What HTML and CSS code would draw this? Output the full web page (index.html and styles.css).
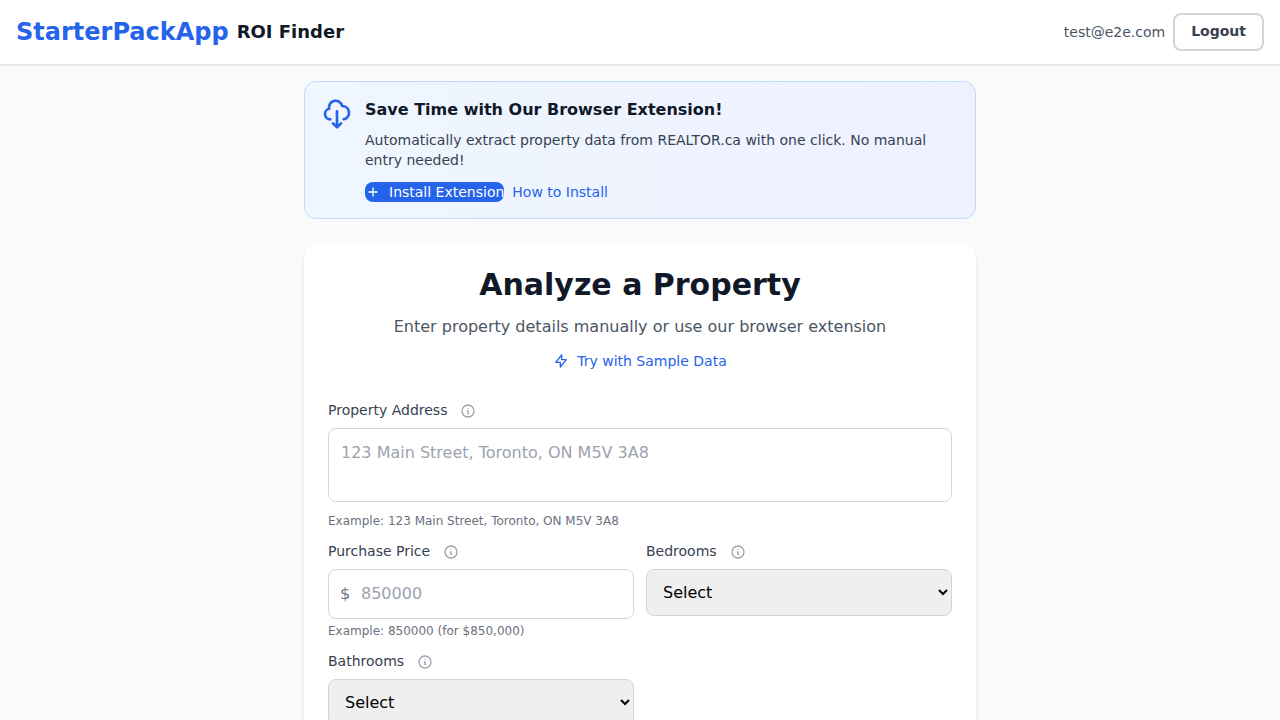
FILE: index.html
```html
<!DOCTYPE html>
<html lang="en">
<head>
<meta charset="utf-8">
<meta name="viewport" content="width=device-width, initial-scale=1">
<title>ROI Finder</title>
<link rel="stylesheet" href="styles.css">
</head>
<body>
<svg class="sprite" aria-hidden="true">
  <symbol id="info" viewBox="0 0 24 24"><path d="M13 16h-1v-4h-1m1-4h.01M21 12a9 9 0 11-18 0 9 9 0 0118 0z"/></symbol>
</svg>
<header class="topbar">
  <div class="brand">
    <a class="brand-name" href="#">StarterPackApp</a>
    <span class="brand-product">ROI Finder</span>
  </div>
  <div class="account">
    <span class="account-email">test@e2e.com</span>
    <button class="logout" type="button">Logout</button>
  </div>
</header>
<main class="page">
  <section class="banner">
    <svg class="icon banner-icon" viewBox="0 0 24 24" aria-hidden="true"><path d="M7 16a4 4 0 01-.88-7.903A5 5 0 1115.9 6L16 6a5 5 0 011 9.9M9 19l3 3m0 0l3-3m-3 3V10"/></svg>
    <div class="banner-body">
      <h2 class="banner-title">Save Time with Our Browser Extension!</h2>
      <p class="banner-text">Automatically extract property data from REALTOR.ca with one click. No manual entry needed!</p>
      <div class="banner-actions">
        <a class="install" href="#"><svg class="icon icon-small" viewBox="0 0 24 24" aria-hidden="true"><path d="M12 6v6m0 0v6m0-6h6m-6 0H6"/></svg>Install Extension</a>
        <a class="link" href="#">How to Install</a>
      </div>
    </div>
  </section>
  <section class="card">
    <div class="card-head">
      <h1 class="card-title">Analyze a Property</h1>
      <p class="card-subtitle">Enter property details manually or use our browser extension</p>
      <button class="sample" type="button"><svg class="icon icon-small" viewBox="0 0 24 24" aria-hidden="true"><path d="M13 10V3L4 14h7v7l9-11h-7z"/></svg>Try with Sample Data</button>
    </div>
    <form class="form">
      <div class="field">
        <div class="label-row"><label for="address">Property Address</label><button class="info" type="button" aria-label="About property address"><svg class="icon icon-small" viewBox="0 0 24 24"><use href="#info"/></svg></button></div>
        <textarea class="control address" id="address" rows="2" placeholder="123 Main Street, Toronto, ON M5V 3A8"></textarea>
        <p class="hint hint-address">Example: 123 Main Street, Toronto, ON M5V 3A8</p>
      </div>
      <div class="grid">
        <div class="field">
          <div class="label-row"><label for="price">Purchase Price</label><button class="info" type="button" aria-label="About purchase price"><svg class="icon icon-small" viewBox="0 0 24 24"><use href="#info"/></svg></button></div>
          <div class="price-box"><span class="currency">$</span><input class="control price" id="price" type="text" inputmode="numeric" placeholder="850000"></div>
          <p class="hint">Example: 850000 (for $850,000)</p>
        </div>
        <div class="field">
          <div class="label-row"><label for="bedrooms">Bedrooms</label><button class="info" type="button" aria-label="About bedrooms"><svg class="icon icon-small" viewBox="0 0 24 24"><use href="#info"/></svg></button></div>
          <select class="control select" id="bedrooms"><option>Select</option><option>1</option><option>2</option><option>3</option></select>
        </div>
        <div class="field">
          <div class="label-row"><label for="bathrooms">Bathrooms</label><button class="info" type="button" aria-label="About bathrooms"><svg class="icon icon-small" viewBox="0 0 24 24"><use href="#info"/></svg></button></div>
          <select class="control select" id="bathrooms"><option>Select</option><option>1</option><option>2</option><option>3</option></select>
        </div>
      </div>
    </form>
  </section>
</main>
</body>
</html>
```
FILE: styles.css
```css
* {
  box-sizing: border-box;
}

body {
  margin: 0;
  background: #f9fafb;
  color: #111827;
  font: 16px/24px "DejaVu Sans", sans-serif;
}

h1, h2, p {
  margin: 0;
}

a {
  text-decoration: none;
}

button, input, select, textarea {
  font: inherit;
}

.sprite {
  display: none;
}

.icon {
  flex: none;
  fill: none;
  stroke: currentColor;
  stroke-width: 2;
  stroke-linecap: round;
  stroke-linejoin: round;
}

.icon-small {
  width: 16px;
  height: 16px;
}

.topbar {
  display: flex;
  align-items: center;
  justify-content: space-between;
  min-height: 65px;
  padding: 0 16px;
  background: #fff;
  border-bottom: 1px solid #e5e7eb;
  box-shadow: 0 1px 2px rgba(0, 0, 0, 0.05);
}

.brand, .account {
  display: flex;
  align-items: center;
  gap: 8px;
}

.brand-name {
  color: #2563eb;
  font-size: 24px;
  font-weight: 700;
  line-height: 32px;
}

.brand-product {
  font-size: 18px;
  font-weight: 600;
  line-height: 28px;
}

.account-email {
  color: #4b5563;
  font-size: 14px;
  line-height: 20px;
}

.logout {
  padding: 6px 16px 8px;
  background: #fff;
  border: 2px solid #d1d5db;
  border-radius: 8px;
  color: #374151;
  font-size: 14px;
  font-weight: 600;
  line-height: 20px;
}

.page {
  max-width: 672px;
  margin: 0 auto;
  padding: 16px 0;
}

.banner {
  display: flex;
  align-items: flex-start;
  gap: 12px;
  margin-bottom: 24px;
  padding: 16px;
  background: linear-gradient(to right, #eff6ff, #eef2ff);
  border: 1px solid #bfdbfe;
  border-radius: 12px;
}

.banner-icon {
  width: 32px;
  height: 32px;
  color: #2563eb;
}

.banner-title {
  margin-bottom: 8px;
  font-size: 16px;
  font-weight: 600;
  line-height: 24px;
}

.banner-text {
  margin-bottom: 12px;
  color: #374151;
  font-size: 14px;
  line-height: 20px;
}

.banner-actions {
  display: flex;
  gap: 8px;
  font-size: 14px;
  line-height: 20px;
}

.install {
  display: flex;
  align-items: center;
  gap: 8px;
  background: #2563eb;
  border-radius: 8px;
  color: #fff;
}

.link {
  color: #2563eb;
}

.card {
  padding: 24px;
  background: #fff;
  border-radius: 16px;
  box-shadow: 0 4px 6px -1px rgba(0, 0, 0, 0.1), 0 2px 4px -2px rgba(0, 0, 0, 0.1);
}

.card-head {
  margin-bottom: 24px;
  text-align: center;
}

.card-title {
  margin-bottom: 12px;
  font-size: 30px;
  font-weight: 700;
  line-height: 36px;
}

.card-subtitle {
  margin-bottom: 12px;
  color: #4b5563;
}

.sample {
  display: inline-flex;
  align-items: center;
  gap: 8px;
  padding: 0;
  background: none;
  border: 0;
  color: #2563eb;
  font-size: 14px;
  line-height: 20px;
}

.label-row {
  display: flex;
  align-items: center;
  gap: 13px;
  margin-bottom: 8px;
  color: #374151;
  font-size: 14px;
  line-height: 20px;
}

.info {
  display: flex;
  padding: 2px 0 0;
  background: none;
  border: 0;
  color: #9ca3af;
}

.control {
  display: block;
  width: 100%;
  background: #fff;
  border: 1px solid #d1d5db;
  border-radius: 8px;
}

.control::placeholder {
  color: #9ca3af;
  opacity: 1;
}

.address {
  padding: 12px;
  resize: none;
}

.hint {
  margin-top: 4px;
  color: #6b7280;
  font-size: 12px;
  line-height: 16px;
}

.hint-address {
  margin-top: 11px;
}

.grid {
  display: grid;
  grid-template-columns: 1fr 1fr;
  gap: 12px;
  margin-top: 12px;
}

.price-box {
  position: relative;
}

.currency {
  position: absolute;
  top: 13px;
  left: 12px;
  color: #6b7280;
}

.price {
  padding: 12px 12px 12px 32px;
}

.select {
  height: 47px;
  padding: 0 0 0 12px;
  background: #efefef;
  color: #000;
}
```
